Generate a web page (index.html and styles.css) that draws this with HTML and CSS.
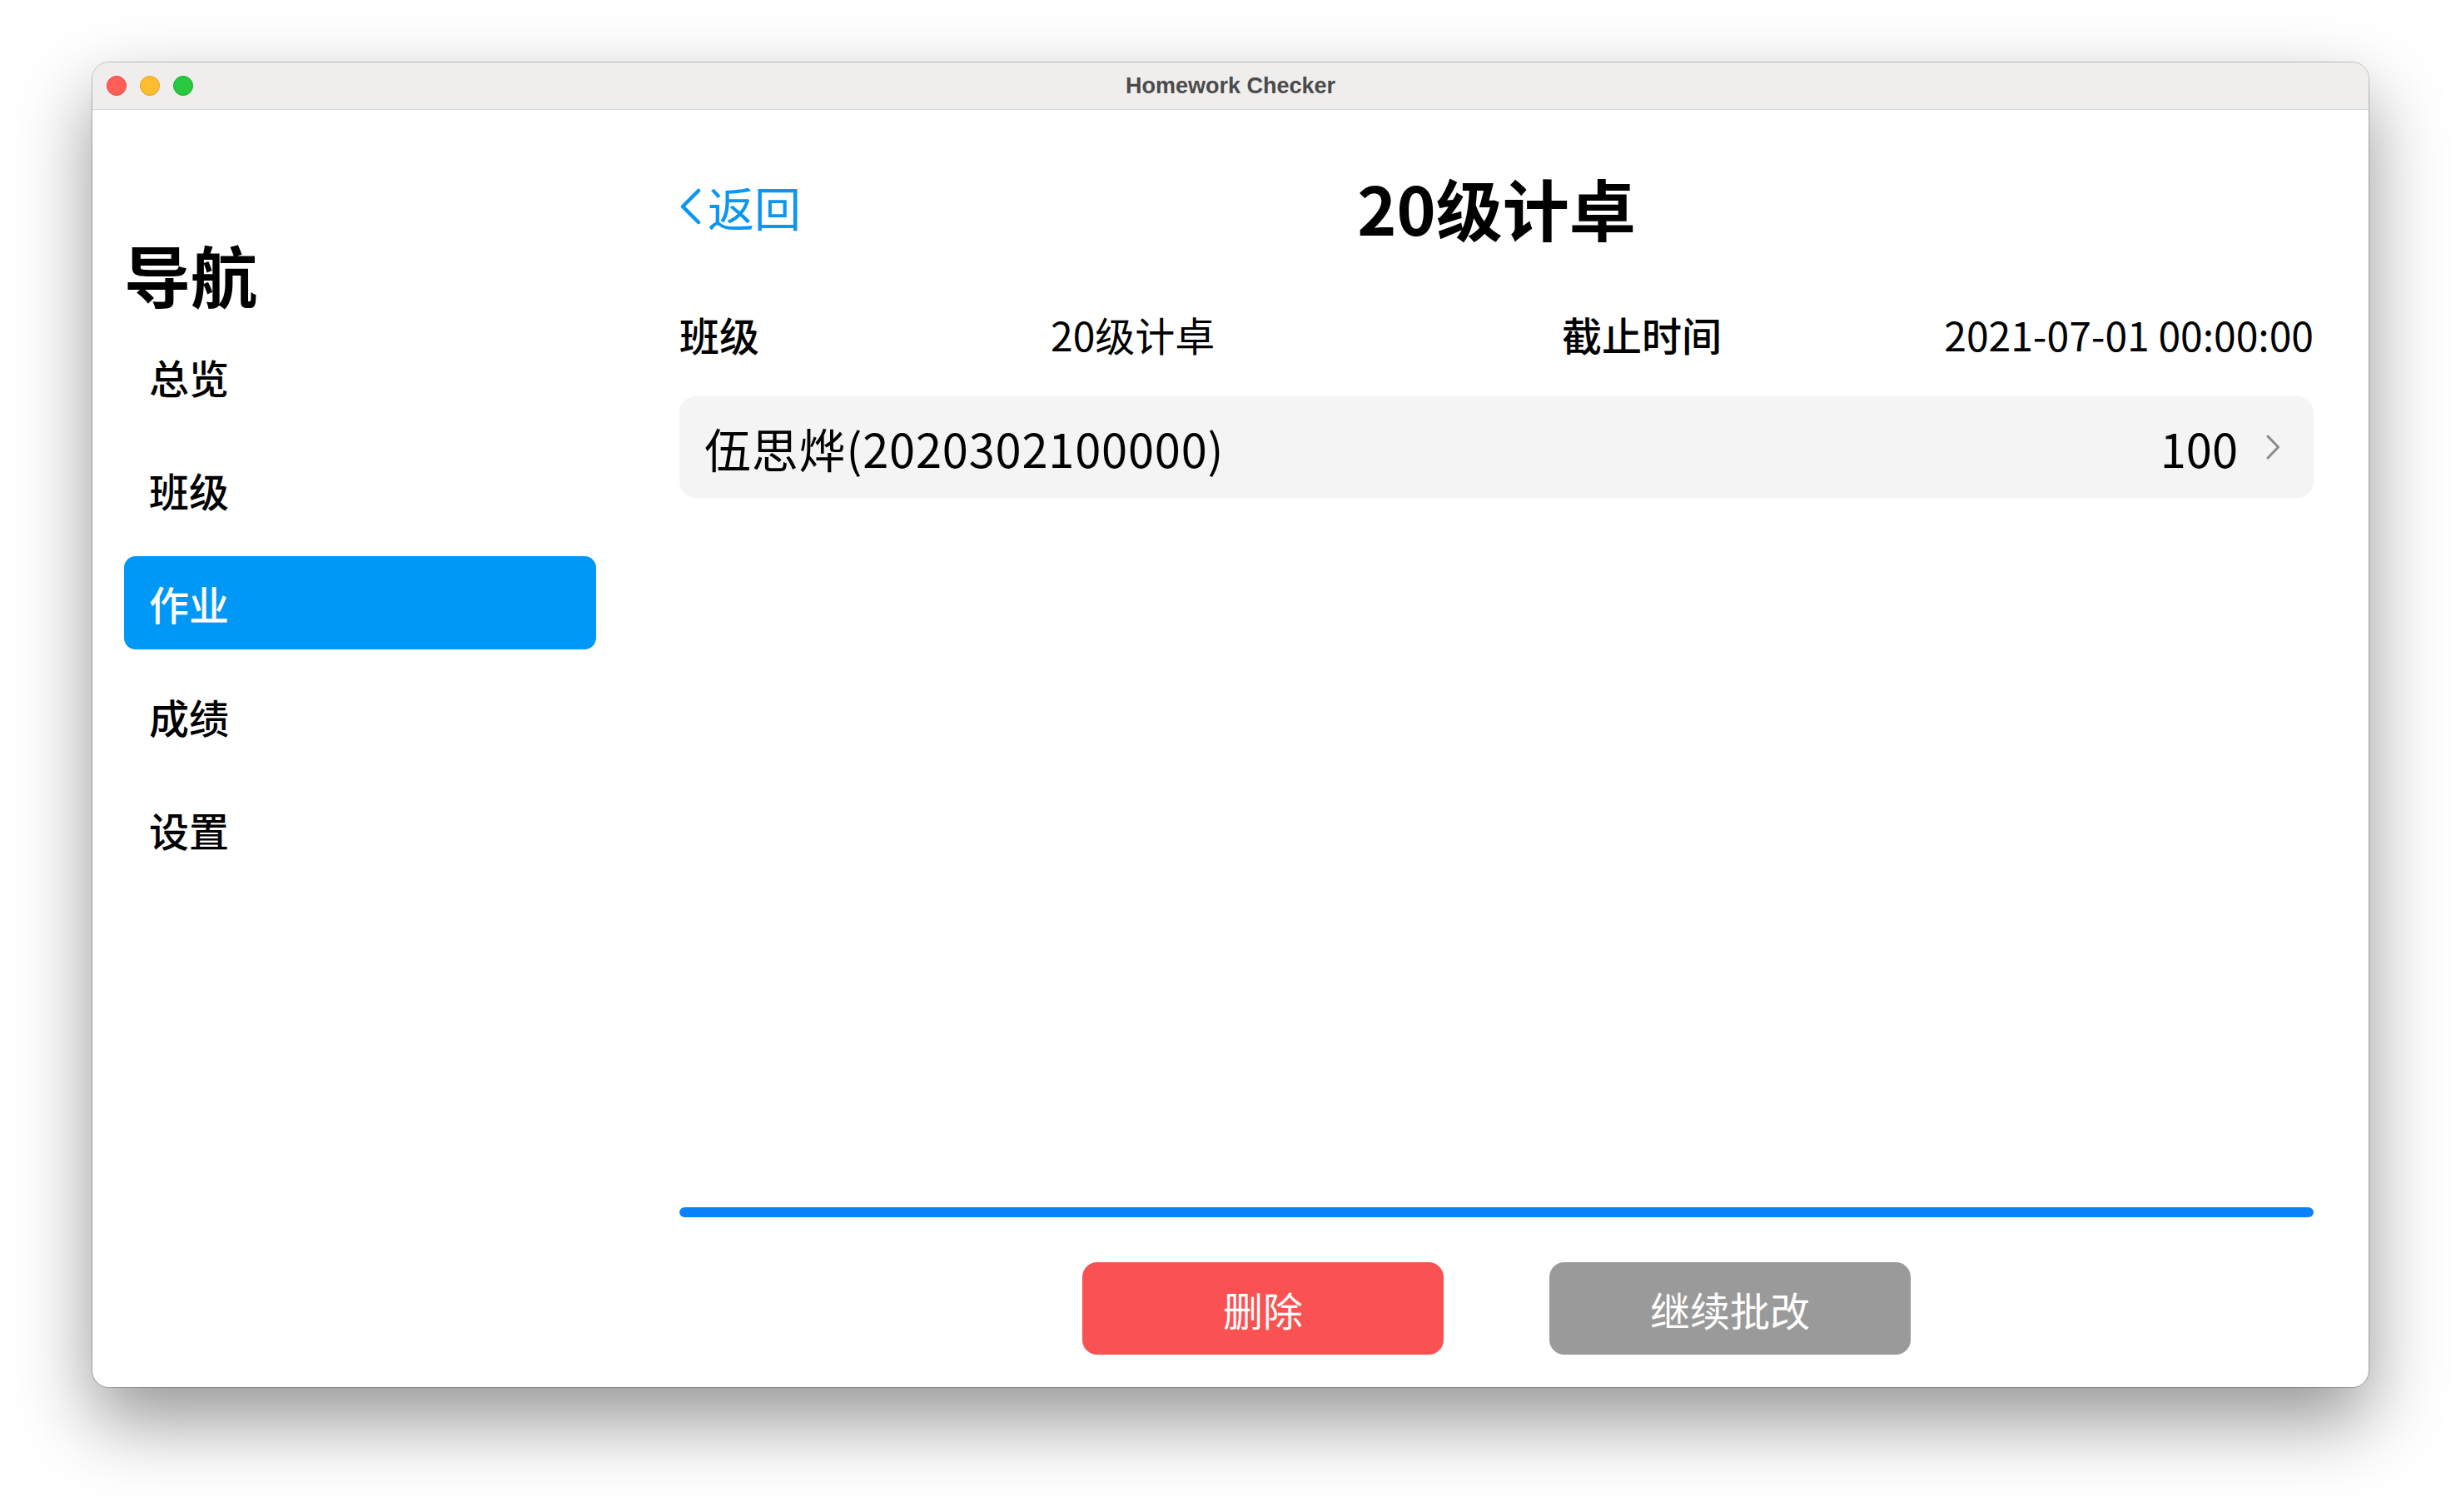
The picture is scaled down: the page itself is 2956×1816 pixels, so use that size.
FILE: index.html
```html
<!DOCTYPE html>
<html lang="zh-CN">
<head>
<meta charset="utf-8">
<title>Homework Checker</title>
<link rel="stylesheet" href="styles.css">
</head>
<body>
<div class="stage">
  <div class="window">
    <header class="titlebar">
      <div class="lights">
        <span class="light red"></span>
        <span class="light yellow"></span>
        <span class="light green"></span>
      </div>
      <div class="win-title">Homework Checker</div>
      <div class="titlebar-spacer"></div>
    </header>
    <div class="content">
      <aside class="sidebar">
        <h1 class="nav-title">导航</h1>
        <nav class="nav-list">
          <div class="nav-item">总览</div>
          <div class="nav-item">班级</div>
          <div class="nav-item active">作业</div>
          <div class="nav-item">成绩</div>
          <div class="nav-item">设置</div>
        </nav>
      </aside>
      <main class="main">
        <div class="header">
          <a class="back">
            <svg class="back-icon" width="26" height="44" viewBox="0 0 26 44"><polyline points="23,3 4,22 23,41" fill="none" stroke="currentColor" stroke-width="4.5" stroke-linecap="round" stroke-linejoin="round"/></svg>
            <span>返回</span>
          </a>
          <h2 class="page-title">20级计卓</h2>
          <div class="header-spacer"></div>
        </div>
        <div class="info">
          <span class="label">班级</span>
          <span class="value">20级计卓</span>
          <span class="label">截止时间</span>
          <span class="value date">2021-07-01 00:00:00</span>
        </div>
        <div class="student-list">
          <div class="student">
            <span class="student-name">伍思烨(2020302100000)</span>
            <span class="score">100</span>
            <svg class="row-chevron" width="18" height="32" viewBox="0 0 18 32"><polyline points="3,3 15.5,16 3,29" fill="none" stroke="currentColor" stroke-width="3" stroke-linecap="round" stroke-linejoin="round"/></svg>
          </div>
        </div>
        <div class="progress"><div class="progress-fill" style="width:100%"></div></div>
        <div class="actions">
          <button class="btn danger">删除</button>
          <button class="btn neutral">继续批改</button>
        </div>
      </main>
    </div>
  </div>
</div>
</body>
</html>
```
FILE: styles.css
```css
html, body {
  margin: 0;
  padding: 0;
  background: #ffffff;
}

body {
  font-family: "Noto Sans CJK SC", "Noto Sans", sans-serif;
  color: #000;
}

.stage {
  width: 2956px;
  height: 1816px;
  box-sizing: border-box;
  padding: 75px 111px 150px 111px;
}

.window {
  height: 100%;
  background: #fff;
  border-radius: 20px;
  overflow: hidden;
  display: flex;
  flex-direction: column;
  box-shadow: 0 0 0 1px rgba(0, 0, 0, 0.22), 0 40px 90px rgba(0, 0, 0, 0.42);
}

/* title bar */
.titlebar {
  height: 56px;
  flex: none;
  background: #efeeed;
  border-bottom: 1px solid #d8d8d8;
  display: grid;
  grid-template-columns: 1fr auto 1fr;
  align-items: center;
}

.lights {
  display: flex;
  gap: 16px;
  padding-left: 17px;
}

.light {
  width: 24px;
  height: 24px;
  border-radius: 50%;
  box-sizing: border-box;
  border: 1px solid;
}

.light.red { background: #ff5f57; border-color: #e2463f; }
.light.yellow { background: #febc2e; border-color: #dea123; }
.light.green { background: #28c840; border-color: #1aab29; }

.win-title {
  font-family: "Liberation Sans", Arial, sans-serif;
  font-weight: 700;
  font-size: 27px;
  color: #4b4b4b;
}

/* content */
.content {
  flex: 1;
  display: flex;
  min-height: 0;
}

.sidebar {
  flex: none;
  width: 567px;
  padding: 156px 0 0 38px;
}

.nav-title {
  margin: 0;
  font-size: 80px;
  line-height: 80px;
  font-weight: 700;
}

.nav-list {
  margin-top: 28px;
  display: flex;
  flex-direction: column;
  gap: 24px;
}

.nav-item {
  height: 112px;
  display: flex;
  align-items: center;
  padding-left: 30px;
  font-size: 48px;
  font-weight: 500;
  line-height: 1;
  border-radius: 14px;
}

.nav-item.active {
  background: #0098f6;
  color: #fff;
}

.main {
  flex: 1;
  margin-left: 100px;
  padding: 66px 66px 39px 0;
  display: flex;
  flex-direction: column;
  min-width: 0;
}

.header {
  height: 100px;
  display: grid;
  grid-template-columns: 1fr auto 1fr;
  align-items: center;
}

.back {
  display: flex;
  align-items: center;
  gap: 8px;
  color: #0a96f3;
  font-size: 56px;
  line-height: 1;
  cursor: pointer;
}

.back-icon {
  display: block;
}

.page-title {
  margin: 0;
  font-size: 80px;
  line-height: 1;
  font-weight: 700;
}

.info {
  margin-top: 73px;
  display: grid;
  grid-template-columns: 446px 614px 1fr auto;
  font-size: 48px;
  line-height: 60px;
  white-space: nowrap;
}

.label {
  font-weight: 500;
}

.value {
  font-weight: 400;
}

.date {
  text-align: right;
}

.student-list {
  margin-top: 45px;
}

.student {
  height: 122px;
  box-sizing: border-box;
  background: #f4f4f4;
  border-radius: 20px;
  display: flex;
  align-items: center;
  padding: 0 40px 0 30px;
  font-size: 56px;
}

.student-name {
  letter-spacing: 0.8px;
}

.score {
  margin-left: auto;
}

.row-chevron {
  display: block;
  margin-left: 33px;
  color: #8a8a8a;
}

.progress {
  margin-top: auto;
  height: 12px;
  border-radius: 6px;
  background: #e4e4e4;
  overflow: hidden;
}

.progress-fill {
  height: 100%;
  background: #0a82fb;
  border-radius: 6px;
}

.actions {
  margin-top: 54px;
  display: flex;
  justify-content: center;
  gap: 127px;
}

.btn {
  width: 434px;
  height: 111px;
  border: none;
  border-radius: 18px;
  color: #fff;
  font-family: "Noto Sans CJK SC", sans-serif;
  font-size: 48px;
  cursor: pointer;
}

.btn.danger { background: #fa5252; }
.btn.neutral { background: #9a9a9a; }
```
